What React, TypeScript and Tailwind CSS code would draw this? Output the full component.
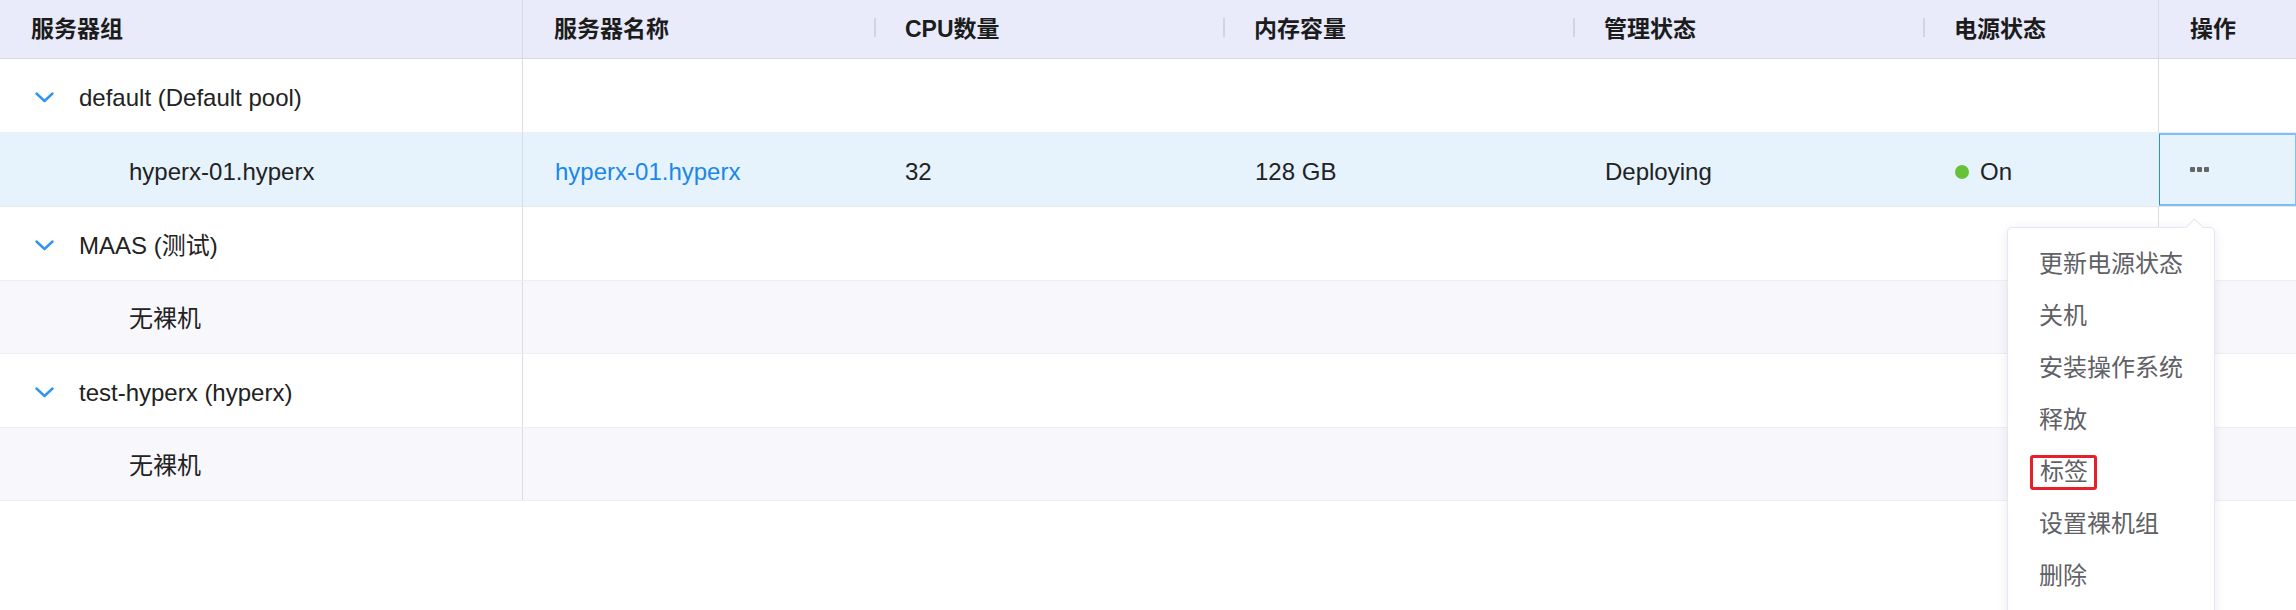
const font = { fontFamily: '"Liberation Sans", "Noto Sans CJK SC", sans-serif' };

const cols = "grid grid-cols-[523px_351px_349px_350px_350px_236px_1fr]";

const headers = ["服务器组", "服务器名称", "CPU数量", "内存容量", "管理状态", "电源状态", "操作"];

const menuItems = ["更新电源状态", "关机", "安装操作系统", "释放", "标签", "设置裸机组", "删除"];

const Chevron = () => (
  <svg width="19" height="11" viewBox="0 0 19 11" className="shrink-0">
    <polyline points="1.5,1.5 9.5,9 17.5,1.5" fill="none" stroke="#2f94f3" strokeWidth="2.4" strokeLinecap="round" strokeLinejoin="round" />
  </svg>
);

const HeaderRow = () => (
  <div className={`${cols} h-[59px] bg-[#e9ebfb] border-b border-[#d6d8e6]`}>
    {headers.map((h, i) => (
      <div
        key={h}
        className={`relative flex items-center pl-[31px] text-[23px] font-bold text-[#1c1c1c] ${
          i === 0 || i === 5 ? "border-r border-[#d8dae6]" : ""
        }`}
      >
        {i >= 2 && i <= 5 && (
          <span className="absolute left-0 top-[18px] h-[19px] w-[2px] bg-[#d2d4e0]" />
        )}
        {h}
      </div>
    ))}
  </div>
);

const GroupRow = ({ name }: { name: string }) => (
  <div className={`${cols} h-[74px] bg-white border-b border-[#ededf3]`}>
    <div className="flex items-center pt-[4px] gap-[25px] pl-[35px] border-r border-[#dcdce4] text-[24px] text-[#222]">
      <Chevron />
      <span>{name}</span>
    </div>
    <div />
    <div />
    <div />
    <div />
    <div className="border-r border-[#dcdce4]" />
    <div />
  </div>
);

const EmptyRow = () => (
  <div className={`${cols} h-[73px] bg-[#f7f7fc] border-b border-[#ededf3]`}>
    <div className="flex items-center pt-[4px] pl-[129px] border-r border-[#dcdce4] text-[24px] text-[#222]">
      无裸机
    </div>
    <div />
    <div />
    <div />
    <div />
    <div className="border-r border-[#dcdce4]" />
    <div />
  </div>
);

const ServerRow = () => (
  <div className={`${cols} h-[74px] bg-[#e6f3fd] border-b border-[#e3e7ef] text-[24px] text-[#222]`}>
    <div className="flex items-center pt-[4px] pl-[129px] border-r border-[#dcdce4]">hyperx-01.hyperx</div>
    <div className="flex items-center pt-[4px] pl-[32px] text-[#1b87e8]">hyperx-01.hyperx</div>
    <div className="flex items-center pt-[4px] pl-[31px]">32</div>
    <div className="flex items-center pt-[4px] pl-[32px]">128 GB</div>
    <div className="flex items-center pt-[4px] pl-[32px]">Deploying</div>
    <div className="flex items-center pt-[4px] pl-[32px] gap-[11px]">
      <span className="h-[14px] w-[14px] rounded-full bg-[#67c23a]" />
      <span>On</span>
    </div>
    <div className="flex items-center pl-[30px] border-l border-[#2f8ae2] border-t-2 border-b-2 border-r border-t-[#80bff5] border-b-[#80bff5] border-r-[#80bff5]">
      <div className="flex gap-[2px]">
        <span className="h-[5px] w-[5px] rounded-[1px] bg-[#666]" />
        <span className="h-[5px] w-[5px] rounded-[1px] bg-[#666]" />
        <span className="h-[5px] w-[5px] rounded-[1px] bg-[#666]" />
      </div>
    </div>
  </div>
);

const Menu = () => (
  <div className="absolute left-[2007px] top-[227px] w-[208px] h-[420px] bg-white border border-[#e4e6f4] rounded-[5px] shadow-[0_2px_12px_rgba(0,0,0,0.08)]">
    <span className="absolute left-[180px] top-[-7px] h-[13px] w-[13px] rotate-45 bg-white border-t border-l border-[#e4e6f4]" />
    <ul className="pt-[10px]">
      {menuItems.map((m) => (
        <li key={m} className="h-[52px] flex items-center pl-[31px] text-[24px] text-[#5f6166]">
          {m === "标签" ? (
            <span className="-ml-[9px] pl-[7px] pr-[6px] h-[35px] flex items-center border-[3px] border-[#e61f2b] rounded-[3px]">
              {m}
            </span>
          ) : (
            m
          )}
        </li>
      ))}
    </ul>
  </div>
);

export default function App() {
  return (
    <div className="relative w-[2296px] h-[610px] bg-white overflow-hidden" style={font}>
      <HeaderRow />
      <GroupRow name="default (Default pool)" />
      <ServerRow />
      <GroupRow name="MAAS (测试)" />
      <EmptyRow />
      <GroupRow name="test-hyperx (hyperx)" />
      <EmptyRow />
      <Menu />
    </div>
  );
}
